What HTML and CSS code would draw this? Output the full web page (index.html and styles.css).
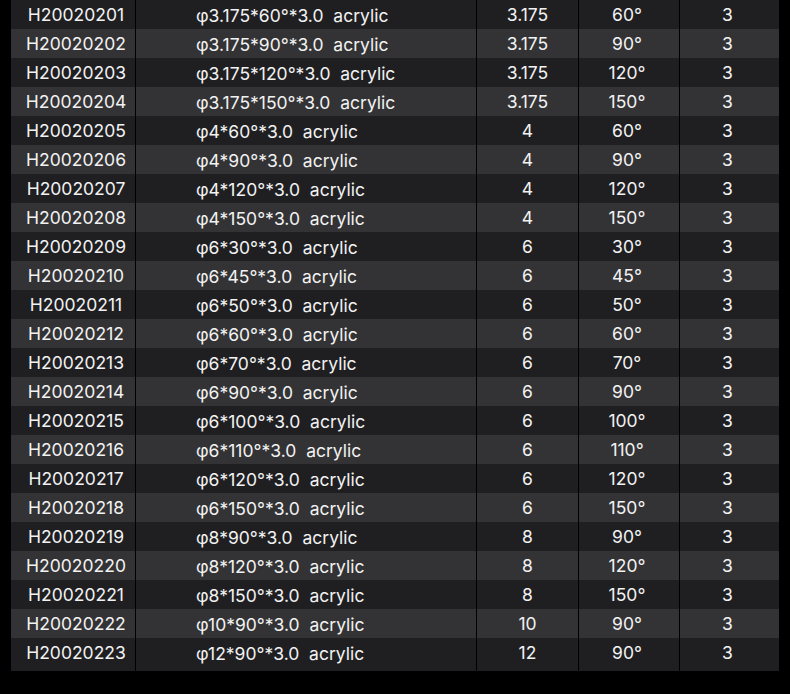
FILE: index.html
```html
<!DOCTYPE html>
<html>
<head>
<meta charset="utf-8">
<link rel="stylesheet" href="styles.css">
</head>
<body>
<div class="table">
  <div class="row"><div class="c code">H20020201</div><div class="c name">φ3.175*60°*3.0  acrylic</div><div class="c">3.175</div><div class="c ang">60°</div><div class="c n">3</div></div>
  <div class="row"><div class="c code">H20020202</div><div class="c name">φ3.175*90°*3.0  acrylic</div><div class="c">3.175</div><div class="c ang">90°</div><div class="c n">3</div></div>
  <div class="row"><div class="c code">H20020203</div><div class="c name">φ3.175*120°*3.0  acrylic</div><div class="c">3.175</div><div class="c ang">120°</div><div class="c n">3</div></div>
  <div class="row"><div class="c code">H20020204</div><div class="c name">φ3.175*150°*3.0  acrylic</div><div class="c">3.175</div><div class="c ang">150°</div><div class="c n">3</div></div>
  <div class="row"><div class="c code">H20020205</div><div class="c name">φ4*60°*3.0  acrylic</div><div class="c">4</div><div class="c ang">60°</div><div class="c n">3</div></div>
  <div class="row"><div class="c code">H20020206</div><div class="c name">φ4*90°*3.0  acrylic</div><div class="c">4</div><div class="c ang">90°</div><div class="c n">3</div></div>
  <div class="row"><div class="c code">H20020207</div><div class="c name">φ4*120°*3.0  acrylic</div><div class="c">4</div><div class="c ang">120°</div><div class="c n">3</div></div>
  <div class="row"><div class="c code">H20020208</div><div class="c name">φ4*150°*3.0  acrylic</div><div class="c">4</div><div class="c ang">150°</div><div class="c n">3</div></div>
  <div class="row"><div class="c code">H20020209</div><div class="c name">φ6*30°*3.0  acrylic</div><div class="c">6</div><div class="c ang">30°</div><div class="c n">3</div></div>
  <div class="row"><div class="c code">H20020210</div><div class="c name">φ6*45°*3.0  acrylic</div><div class="c">6</div><div class="c ang">45°</div><div class="c n">3</div></div>
  <div class="row"><div class="c code">H20020211</div><div class="c name">φ6*50°*3.0  acrylic</div><div class="c">6</div><div class="c ang">50°</div><div class="c n">3</div></div>
  <div class="row"><div class="c code">H20020212</div><div class="c name">φ6*60°*3.0  acrylic</div><div class="c">6</div><div class="c ang">60°</div><div class="c n">3</div></div>
  <div class="row"><div class="c code">H20020213</div><div class="c name">φ6*70°*3.0  acrylic</div><div class="c">6</div><div class="c ang">70°</div><div class="c n">3</div></div>
  <div class="row"><div class="c code">H20020214</div><div class="c name">φ6*90°*3.0  acrylic</div><div class="c">6</div><div class="c ang">90°</div><div class="c n">3</div></div>
  <div class="row"><div class="c code">H20020215</div><div class="c name">φ6*100°*3.0  acrylic</div><div class="c">6</div><div class="c ang">100°</div><div class="c n">3</div></div>
  <div class="row"><div class="c code">H20020216</div><div class="c name">φ6*110°*3.0  acrylic</div><div class="c">6</div><div class="c ang">110°</div><div class="c n">3</div></div>
  <div class="row"><div class="c code">H20020217</div><div class="c name">φ6*120°*3.0  acrylic</div><div class="c">6</div><div class="c ang">120°</div><div class="c n">3</div></div>
  <div class="row"><div class="c code">H20020218</div><div class="c name">φ6*150°*3.0  acrylic</div><div class="c">6</div><div class="c ang">150°</div><div class="c n">3</div></div>
  <div class="row"><div class="c code">H20020219</div><div class="c name">φ8*90°*3.0  acrylic</div><div class="c">8</div><div class="c ang">90°</div><div class="c n">3</div></div>
  <div class="row"><div class="c code">H20020220</div><div class="c name">φ8*120°*3.0  acrylic</div><div class="c">8</div><div class="c ang">120°</div><div class="c n">3</div></div>
  <div class="row"><div class="c code">H20020221</div><div class="c name">φ8*150°*3.0  acrylic</div><div class="c">8</div><div class="c ang">150°</div><div class="c n">3</div></div>
  <div class="row"><div class="c code">H20020222</div><div class="c name">φ10*90°*3.0  acrylic</div><div class="c">10</div><div class="c ang">90°</div><div class="c n">3</div></div>
  <div class="row last"><div class="c code">H20020223</div><div class="c name">φ12*90°*3.0  acrylic</div><div class="c">12</div><div class="c ang">90°</div><div class="c n">3</div></div>
</div>
</body>
</html>
```
FILE: styles.css
```css
html, body {
  margin: 0;
  padding: 0;
  background: #000;
}
body {
  font-family: Inter, "Noto Sans", "DejaVu Sans", sans-serif;
  font-size: 17.5px;
  font-feature-settings: "calt" 0;
  color: #f2f2f2;
}
.table {
  margin-left: 11px;
  width: 768px;
  display: flex;
  flex-direction: column;
}
.row {
  display: grid;
  grid-template-columns: 124px 340px 101px 100px 99px;
  column-gap: 1px;
  height: 29px;
}
.row.last {
  height: 33px;
}
.c {
  background: #1f1f22;
  text-align: center;
  line-height: 29px;
  height: 100%;
  padding-bottom: 5px;
  box-sizing: border-box;
  white-space: pre;
  overflow: hidden;
}
.row:nth-child(even) .c {
  background: #333335;
}
.code {
  padding-left: 6px;
}
.name {
  text-align: left;
  padding-left: 60px;
  padding-bottom: 0;
  padding-top: 1px;
}
.ang {
  padding-right: 4px;
}
.n {
  padding-right: 4px;
}
```
